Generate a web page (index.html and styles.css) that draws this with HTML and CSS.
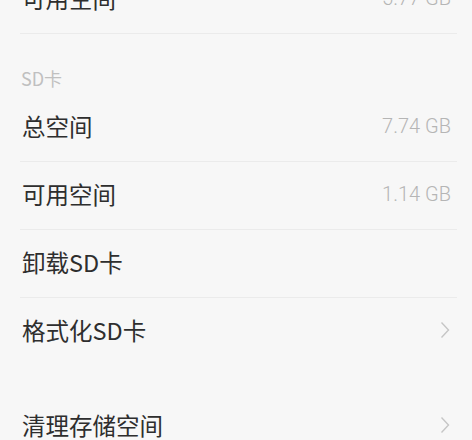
FILE: index.html
```html
<!DOCTYPE html>
<html lang="zh-CN">
<head>
<meta charset="utf-8">
<link rel="stylesheet" href="styles.css">
</head>
<body>
<div class="page">
  <div class="group first">
    <div class="row line"><span class="label">可用空间</span><span class="value">5.77 GB</span></div>
  </div>
  <div class="header">SD卡</div>
  <div class="group">
    <div class="row line"><span class="label">总空间</span><span class="value">7.74 GB</span></div>
    <div class="row line"><span class="label">可用空间</span><span class="value">1.14 GB</span></div>
    <div class="row line"><span class="label">卸载SD卡</span></div>
    <div class="row"><span class="label">格式化SD卡</span>
      <svg class="chev" width="10" height="18" viewBox="0 0 10 18"><polyline points="1.5,1.5 8.5,9 1.5,16.5" fill="none" stroke="#c6c6c6" stroke-width="1.4"/></svg>
    </div>
  </div>
  <div class="group spaced">
    <div class="row"><span class="label">清理存储空间</span>
      <svg class="chev" width="10" height="18" viewBox="0 0 10 18"><polyline points="1.5,1.5 8.5,9 1.5,16.5" fill="none" stroke="#c6c6c6" stroke-width="1.4"/></svg>
    </div>
  </div>
</div>
</body>
</html>
```
FILE: styles.css
```css
html, body {
  margin: 0;
  padding: 0;
  background: #f7f7f7;
}
body {
  overflow: hidden;
  height: 440px;
}
.page {
  margin: -34px 15px 0 20px;
  font-family: "Noto Sans CJK SC", "Noto Sans", sans-serif;
}
.row {
  display: flex;
  align-items: center;
  justify-content: space-between;
  height: 68px;
  padding-bottom: 4px;
  box-sizing: border-box;
}
.line {
  border-bottom: 1px solid #ebebeb;
}
.label {
  padding-left: 2px;
  font-size: 23.5px;
  color: #2e2e2e;
}
.value {
  padding-right: 6px;
  font-family: Roboto, "Noto Sans", sans-serif;
  font-weight: 300;
  font-size: 20px;
  color: #b5b5b5;
}
.header {
  height: 60px;
  box-sizing: border-box;
  display: flex;
  align-items: flex-end;
  padding: 0 0 3px 1px;
  font-size: 18px;
  color: #c0c0c0;
}
.chev {
  margin-right: 7px;
}
.spaced {
  margin-top: 27px;
}
```
